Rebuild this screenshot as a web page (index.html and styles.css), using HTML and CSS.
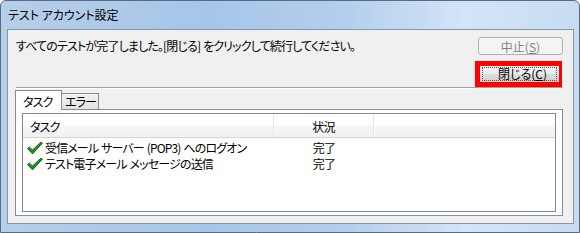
FILE: index.html
```html
<!DOCTYPE html>
<html lang="ja">
<head>
<meta charset="utf-8">
<title>テスト アカウント設定</title>
<link rel="stylesheet" href="styles.css">
</head>
<body>
<div class="window">
  <div class="titlebar"><span class="title">テスト アカウント設定</span></div>
  <div class="client">
    <div class="row1">
      <p class="msg">すべてのテストが完了しました。[閉じる] をクリックして続行してください。</p>
      <button class="btn disabled">中止(<u>S</u>)</button>
    </div>
    <div class="row2">
      <div class="highlight">
        <button class="btn primary"><span class="focus">閉じる(<u>C</u>)</span></button>
      </div>
    </div>
    <div class="sep"></div>
    <div class="tabs">
      <div class="tab active">タスク</div>
      <div class="tab">エラー</div>
    </div>
    <div class="panel">
      <div class="list">
        <div class="lhead">
          <div class="c1">タスク</div>
          <div class="c2">状況</div>
          <div class="c3"></div>
        </div>
        <div class="lbody">
          <div class="lrow">
            <div class="c1"><svg class="check" width="16" height="12" viewBox="0 0 16 12"><polygon points="0.5,6.5 2.5,5 5.5,8 14,0 15.5,1.2 6,11.5 5,11.5" fill="#1f8f1f" stroke="#0d5e0d" stroke-width="0.8" stroke-linejoin="round"/></svg><span>受信メール サーバー (POP3) へのログオン</span></div>
            <div class="c2">完了</div>
          </div>
          <div class="lrow">
            <div class="c1"><svg class="check" width="16" height="12" viewBox="0 0 16 12"><polygon points="0.5,6.5 2.5,5 5.5,8 14,0 15.5,1.2 6,11.5 5,11.5" fill="#1f8f1f" stroke="#0d5e0d" stroke-width="0.8" stroke-linejoin="round"/></svg><span>テスト電子メール メッセージの送信</span></div>
            <div class="c2">完了</div>
          </div>
        </div>
      </div>
    </div>
  </div>
</div>
</body>
</html>
```
FILE: styles.css
```css
* { box-sizing: border-box; }
html, body { margin: 0; padding: 0; }
body {
  width: 580px;
  height: 233px;
  overflow: hidden;
  font-family: "Noto Sans CJK JP", sans-serif;
  font-size: 12px;
  font-feature-settings: "palt";
  color: #000;
}
.window {
  width: 580px;
  height: 233px;
  border: 1px solid #5b6b80;
  border-radius: 6px 6px 0 0;
  padding: 0 5px 8px 6px;
  background: linear-gradient(to right, #b6cfea 0%, #a6c5e8 35%, #b4cfed 60%, #d2e4f7 80%, #c7dcf2 100%);
  display: flex;
  flex-direction: column;
}
.titlebar {
  height: 28px;
  line-height: 28px;
  padding-left: 1px;
  white-space: nowrap;
}
.title { font-size: 12px; }
.client {
  height: 195px;
  background: #f0f0f0;
  border: 1px solid #8396ad;
  padding: 7px 10px 7px 8px;
  display: flex;
  flex-direction: column;
  letter-spacing: -0.85px;
  word-spacing: 1px;
  white-space: nowrap;
}
.row1 {
  display: flex;
  justify-content: space-between;
  align-items: center;
  height: 18px;
}
.msg { margin: 0; line-height: 18px; }
.btn {
  font: inherit;
  font-feature-settings: "palt";
  letter-spacing: 0;
  word-spacing: 0;
  padding: 0;
  margin: 0;
  display: flex;
  align-items: center;
  justify-content: center;
}
.btn u { text-decoration: underline; }
.disabled {
  width: 85px;
  height: 18px;
  border: 1px solid #adb2b5;
  border-radius: 3px;
  background: #f4f4f4;
  color: #838383;
}
.row2 {
  display: flex;
  justify-content: flex-end;
  margin-top: 6px;
  padding-right: 1px;
}
.highlight {
  border-style: solid;
  border-color: #ff0000;
  border-width: 5px 3px 5px 5px;
}
.primary {
  width: 79px;
  height: 16px;
  border: 0;
  background: linear-gradient(#f3f3f3 0%, #ebebeb 50%, #dddddd 50%, #cfcfcf 100%);
  padding: 1px 2px;
}
.focus {
  display: flex;
  align-items: center;
  justify-content: center;
  width: 100%;
  height: 100%;
  border: 1px dotted #555;
  line-height: 12px;
  padding-left: 6px;
}
.sep {
  height: 2px;
  border-top: 1px solid #a0a0a0;
  border-bottom: 1px solid #ffffff;
}
.tabs {
  margin-top: 1px;
  height: 19px;
  margin-left: -1px;
  display: flex;
  align-items: flex-end;
}
.tab {
  width: 38px;
  height: 16px;
  border: 1px solid #898c95;
  border-bottom: 0;
  background: linear-gradient(#f2f2f2, #e2e2e2);
  margin-left: -1px;
  line-height: 15px;
  padding-left: 3px;
}
.tab.active {
  width: 47px;
  height: 20px;
  margin-left: 0;
  margin-bottom: -1px;
  background: #ffffff;
  position: relative;
  z-index: 1;
  padding-left: 7px;
  line-height: 21px;
}
.panel {
  margin-left: -1px;
  height: 107px;
  background: #ffffff;
  border: 1px solid #898c95;
  padding: 3px 6px;
}
.list {
  height: 99px;
  border: 1px solid #828790;
  background: #ffffff;
}
.lhead {
  display: flex;
  height: 24px;
  background: linear-gradient(#ffffff 0%, #ffffff 45%, #f4f5f7 55%, #f1f2f4 100%);
  border-bottom: 1px solid #d5d5d5;
}
.lhead > div { padding-top: 3px; line-height: 20px; }
.lhead .c1 { width: 251px; padding-left: 7px; border-right: 1px solid #e5e7ea; }
.lhead .c2 { width: 100px; text-align: center; border-right: 1px solid #e3e5e8; }
.lhead .c3 { flex: 1; border-left: 1px solid #ffffff; }
.lbody { padding-top: 2px; }
.lrow { display: flex; height: 16px; line-height: 16px; }
.lrow .c1 { width: 251px; padding-left: 4px; display: flex; align-items: center; }
.lrow .c2 { width: 100px; text-align: center; }
.check { flex: none; margin-right: 2px; }
```
